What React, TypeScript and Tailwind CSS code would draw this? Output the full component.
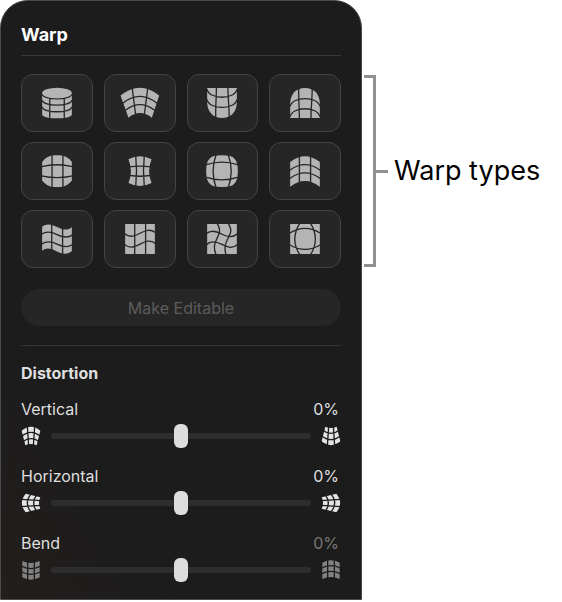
import React, { useState } from "react";
import clsx from "clsx";

interface WarpType {
	name: string;
	shape: string;
	lines: string;
	top?: boolean;
	flipped?: boolean;
}

const SQUARE = "M15 6H105V97H15Z";
const DOME = "M15 6H105V48C105 78 88 97 60 97C32 97 15 78 15 48Z";
const DOME_LINES = "M15 10C22 42 98 42 105 10M15 41C22 73 98 73 105 41M43 4C43 36 40 66 41 100M78 4C78 36 82 66 82 100";

const WARP_TYPES: WarpType[] = [
	{
		name: "Cylinder",
		shape: "M15 22V86C18 102 102 102 105 86V22Z",
		lines: "M15 24C18 44 102 44 105 24M15 43C18 63 102 63 105 43M15 63C18 83 102 83 105 63M38 38V100M82 38V100",
		top: true,
	},
	{
		name: "Arc",
		shape: "M1 29Q60 -18 118 29L96 96Q60 68 25 96Z",
		lines: "M8 52Q60 11 111 52M15 74Q60 39 105 74M36 3L47 88M84 3L73 88",
	},
	{ name: "Bowl", shape: DOME, lines: DOME_LINES },
	{ name: "Dome", shape: DOME, lines: DOME_LINES, flipped: true },
	{
		name: "Barrel",
		shape: "M15 24Q30 4 52 4H68Q90 4 105 24V80Q90 100 68 100H52Q30 100 15 80Z",
		lines: "M13 38Q60 27 107 38M13 66Q60 77 107 66M45 2V102M78 2V102",
	},
	{
		name: "Pinch",
		shape: "M25 16Q60 -2 95 16Q80 52 95 88Q60 106 25 88Q40 52 25 16Z",
		lines: "M28 39Q60 34 92 39M28 65Q60 70 92 65M47 4Q52 52 47 100M73 4Q68 52 73 100",
	},
	{
		name: "Sphere",
		shape: "M60 4Q90 4 97 14Q108 24 108 52Q108 80 97 90Q90 100 60 100Q30 100 23 90Q12 80 12 52Q12 24 23 14Q30 4 60 4Z",
		lines: "M13 32Q60 17 107 32M13 71Q60 86 107 71M42 2Q24 52 42 102M79 2Q97 52 79 102",
	},
	{
		name: "Arch",
		shape: "M15 24Q60 -10 105 24V99Q60 64 15 99Z",
		lines: "M14 49Q60 15 106 49M14 74Q60 40 106 74M43 2V92M77 2V92",
	},
	{
		name: "Flag",
		shape: "M15 14C28 4 42 6 60 15S92 27 105 16V88C92 100 78 98 60 89S28 76 15 87Z",
		lines: "M13 37C28 27 42 29 60 38S92 50 107 39M13 67C28 57 42 58 60 67S92 79 107 68M44 2V102M77 2V102",
	},
	{
		name: "Wave",
		shape: SQUARE,
		lines: "M14 36C30 48 42 43 60 34S90 20 107 32M14 69C30 81 42 76 60 67S90 53 107 65M44 4V99M77 4V99",
	},
	{
		name: "Twirl",
		shape: SQUARE,
		lines: "M13 35C26 23 42 27 60 37S92 48 107 36M13 69C26 55 42 59 60 68S92 82 107 68M45 4C60 24 50 38 43 54S34 80 42 99M79 4C92 24 86 36 78 50S66 80 72 99",
	},
	{
		name: "Lens",
		shape: SQUARE,
		lines: "M13 34Q60 5 107 34M13 69Q60 97 107 69M44 4Q14 52 44 99M77 4Q106 52 77 99",
	},
];

const FAN = {
	shape: "M2 14Q30 -9 58 14L47 58Q30 50 13 58Z",
	lines: "M2 31Q30 7 58 31M4 48Q30 28 56 48M19 0L23 60M41 0L37 60",
};
const CURVE = {
	shape: "M4 3Q30 15 56 3V52Q30 66 4 52Z",
	lines: "M3 19Q30 33 57 19M3 36Q30 50 57 36M20 0V62M40 0V62",
};

const DISTORTIONS = [
	{ label: "Vertical", icon: FAN, start: 0, end: 180, muted: false },
	{ label: "Horizontal", icon: FAN, start: -90, end: 90, muted: false },
	{ label: "Bend", icon: CURVE, start: 0, end: 180, muted: true },
];

const WarpIcon = ({ type }: { type: WarpType }) => (
	<svg viewBox="0 0 120 103" className="h-[34px] w-10" fill="none" aria-hidden="true">
		<g transform={type.flipped ? "matrix(1 0 0 -1 0 103)" : undefined}>
			<path d={type.shape} fill="#b4b4b4" />
			<path d={type.lines} stroke="#262626" strokeWidth="4" />
			{type.top && <ellipse cx="60" cy="21" rx="45" ry="16" fill="#b4b4b4" />}
		</g>
	</svg>
);

interface DistortionIconProps {
	icon: { shape: string; lines: string };
	angle: number;
	muted: boolean;
}

const DistortionIcon = ({ icon, angle, muted }: DistortionIconProps) => (
	<svg viewBox="0 0 60 60" className="size-5 shrink-0" fill="none" aria-hidden="true">
		<g transform={`rotate(${angle} 30 30)`}>
			<path d={icon.shape} fill={muted ? "#828282" : "#e4e4e4"} />
			<path d={icon.lines} stroke="#1c1c1c" strokeWidth="4" />
		</g>
	</svg>
);

interface DistortionSliderProps {
	label: string;
	icon: { shape: string; lines: string };
	start: number;
	end: number;
	muted: boolean;
}

const DistortionSlider: React.FC<DistortionSliderProps> = ({ label, icon, start, end, muted }) => {
	const [value, setValue] = useState(0);
	const id = `distortion-${label.toLowerCase()}`;
	return (
		<div>
			<div className="flex items-center justify-between pr-0.5 text-base leading-5">
				<label htmlFor={id}>{label}</label>
				<output htmlFor={id} className={clsx(muted && "text-[#777777]")}>{`${value}%`}</output>
			</div>
			<div className="mt-[5px] flex items-center gap-2.5">
				<DistortionIcon icon={icon} angle={start} muted={muted} />
				<input
					id={id}
					type="range"
					min={-100}
					max={100}
					value={value}
					onChange={(e) => setValue(Number(e.target.value))}
					className="h-6 min-w-0 flex-1 appearance-none bg-transparent [&::-webkit-slider-runnable-track]:h-1.5 [&::-webkit-slider-runnable-track]:rounded-full [&::-webkit-slider-runnable-track]:bg-[#2d2d2d] [&::-webkit-slider-thumb]:-mt-[9px] [&::-webkit-slider-thumb]:h-6 [&::-webkit-slider-thumb]:w-3.5 [&::-webkit-slider-thumb]:appearance-none [&::-webkit-slider-thumb]:rounded-md [&::-webkit-slider-thumb]:bg-[#dddddd]"
				/>
				<DistortionIcon icon={icon} angle={end} muted={muted} />
			</div>
		</div>
	);
};

const App: React.FC = () => {
	return (
		<div className="flex bg-white font-['Inter',sans-serif]">
			<main className="min-w-0 flex-1 rounded-t-[28px] border border-[#4a4a4a] bg-[#1c1c1c] bg-linear-to-tr from-[#221e1c] to-[#1c1c1c] to-25% px-5 pb-[17px] text-[#dfdfdf]">
				<h1 className="border-b border-[#383838] pt-5 pb-1.5 text-lg font-bold text-white">Warp</h1>
				<div className="mt-[18px] grid grid-cols-4 gap-x-[11px] gap-y-2.5">
					{WARP_TYPES.map((type) => (
						<button
							key={type.name}
							type="button"
							aria-label={type.name}
							className="flex h-[58px] items-center justify-center rounded-xl border border-[#444444] bg-[#262626]"
						>
							<WarpIcon type={type} />
						</button>
					))}
				</div>
				<button
					type="button"
					disabled
					className="mt-[21px] h-[37px] w-full rounded-full bg-[#262626] text-base text-[#5c5c5c]"
				>
					Make Editable
				</button>
				<section className="mt-[19px] border-t border-[#343434] pt-[17px]">
					<h2 className="text-base leading-5 font-bold">Distortion</h2>
					<div className="mt-4 flex flex-col gap-[18px]">
						{DISTORTIONS.map((item) => (
							<DistortionSlider key={item.label} {...item} />
						))}
					</div>
				</section>
			</main>
			<aside className="flex w-[200px] shrink-0 items-start pt-[75px] pl-0.5">
				<div className="flex h-48 items-center">
					<span className="h-full w-3 border-y-3 border-r-3 border-[#909090]" />
					<span className="h-[3px] w-3 bg-[#909090]" />
					<p className="ml-1.5 text-[27px] whitespace-nowrap text-black">Warp types</p>
				</div>
			</aside>
		</div>
	);
};

export default App;
